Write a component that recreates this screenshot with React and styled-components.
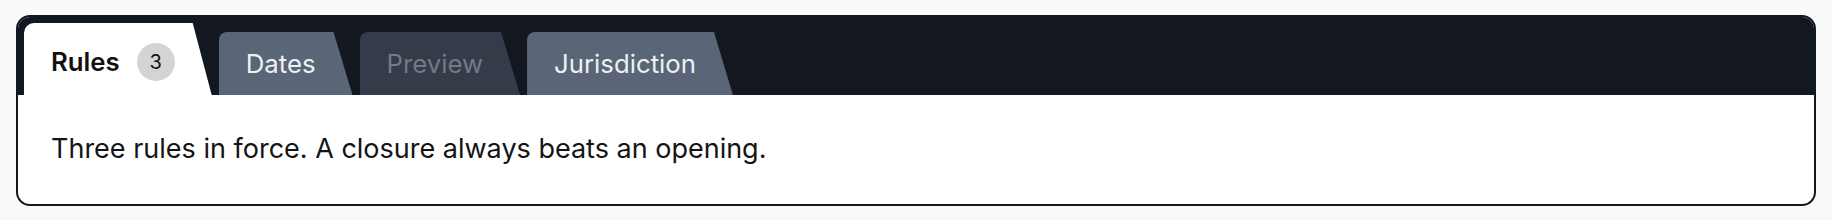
import React, { useState } from "react";
import styled, { createGlobalStyle, css } from "styled-components";

const GlobalStyle = createGlobalStyle`
	html, body {
		margin: 0;
		background: #f9f9f9;
		font-family: Inter, "Noto Sans", sans-serif;
	}
`;

const Page = styled.div`
	padding: 15px 16px;
`;

const Card = styled.section`
	border: 2px solid #131720;
	border-radius: 14px;
	overflow: hidden;
	background: #ffffff;
`;

const TabBar = styled.div`
	display: flex;
	align-items: flex-end;
	gap: 7px;
	height: 78px;
	padding: 0 6px;
	box-sizing: border-box;
	background: #131720;
`;

const Tab = styled.button`
	display: flex;
	align-items: center;
	gap: 17px;
	border: none;
	margin: 0;
	font-family: inherit;
	font-size: 25.75px;
	line-height: 30px;
	padding: 0 37px 0 27px;
	clip-path: polygon(0 0, calc(100% - 19px) 0, 100% 100%, 0 100%);
	cursor: pointer;

	${(p) =>
		p.$active
			? css`
					height: 72px;
					padding-top: 6px;
					background: #ffffff;
					color: #111111;
					font-weight: 600;
					border-radius: 10px 0 0 0;
			  `
			: css`
					height: 63px;
					background: ${p.$disabled ? "#343b49" : "#5a6577"};
					color: ${p.$disabled ? "#737a86" : "#eef0f3"};
					font-weight: 400;
					border-radius: 8px 0 0 0;
			  `}
`;

const Badge = styled.span`
	display: inline-flex;
	align-items: center;
	justify-content: center;
	width: 38px;
	height: 38px;
	border-radius: 50%;
	background: #d4d4d4;
	color: #111111;
	font-size: 20px;
	font-weight: 400;
`;

const Panel = styled.div`
	padding: 34px 33px 35px;
	font-size: 27px;
	line-height: 40px;
	color: #141414;
`;

const tabs = [
	{ id: "rules", label: "Rules", count: 3 },
	{ id: "dates", label: "Dates" },
	{ id: "preview", label: "Preview", disabled: true },
	{ id: "jurisdiction", label: "Jurisdiction" },
];

export default function App() {
	const [active, setActive] = useState("rules");
	return (
		<Page>
			<GlobalStyle />
			<Card>
				<TabBar>
					{tabs.map((t) => (
						<Tab
							key={t.id}
							$active={t.id === active}
							$disabled={t.disabled}
							onClick={() => !t.disabled && setActive(t.id)}
						>
							{t.label}
							{t.count && <Badge>{t.count}</Badge>}
						</Tab>
					))}
				</TabBar>
				<Panel>Three rules in force. A closure always beats an opening.</Panel>
			</Card>
		</Page>
	);
}
